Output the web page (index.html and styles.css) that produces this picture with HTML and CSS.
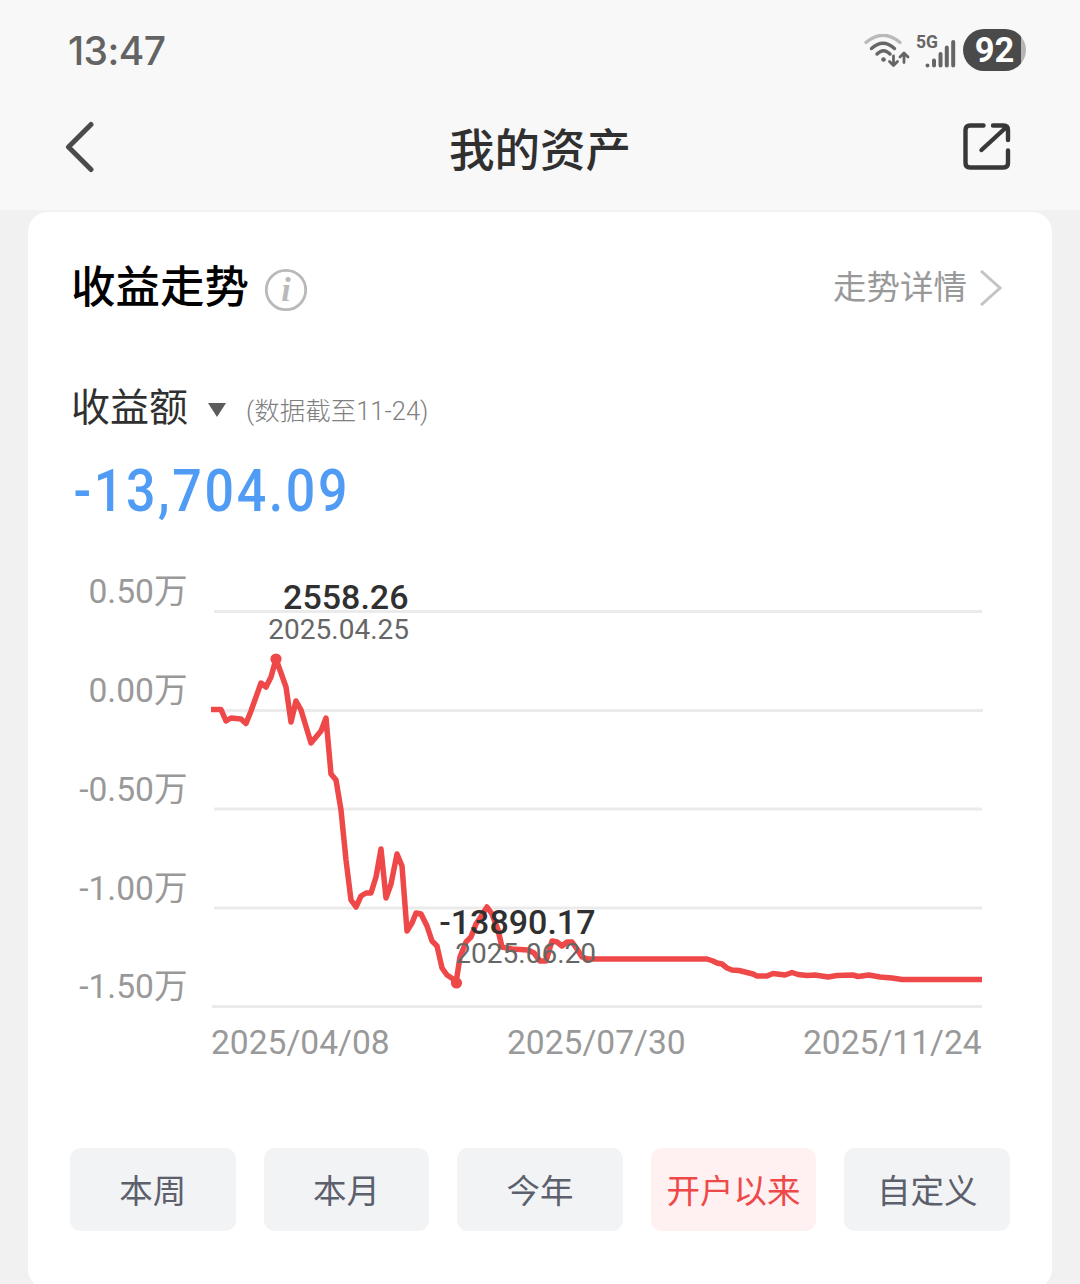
FILE: index.html
```
<!DOCTYPE html>
<html lang="zh-CN">
<head>
  <meta charset="UTF-8">
  <meta name="viewport" content="width=device-width, initial-scale=1.0">
  <title>我的资产</title>
  <link rel="stylesheet" href="styles.css">
</head>
<body>
  <header class="top">
    <div class="status-bar">
      <span class="time">13:47</span>
      <div class="status-icons">
        <svg class="wifi" width="48" height="38" viewBox="0 0 48 38" fill="none" stroke-linecap="round">
          <path d="M3 8.500Q20 -6 37 8.500" stroke="#b9b9b9" stroke-width="3.200"/>
          <path d="M8.500 14.500Q20 4 31.500 14.500" stroke="#666" stroke-width="3.400"/>
          <path d="M14 20Q20.500 13.500 27 20" stroke="#666" stroke-width="3.400"/>
          <circle cx="20.500" cy="25.500" r="2.300" fill="#666"/>
          <path d="M30.500 22V31M26.500 27.500L30.500 31.500L34.500 27.500M41 28.500V19.500M37 23L41 19L45 23" stroke="#666" stroke-width="2.800" stroke-linejoin="round"/>
        </svg>
        <svg class="signal" width="41" height="38" viewBox="0 0 41 38">
          <text x="0" y="14" class="net">5G</text>
          <path d="M11.500 31.500V31.500M18 31.500V26.500M24.500 31.500V20M30.800 31.500V13.500M37.200 31.500V8" fill="none" stroke="#666" stroke-width="4" stroke-linecap="round"/>
        </svg>
        <div class="battery"><span>92</span></div>
      </div>
    </div>
    <div class="nav-bar">
      <svg class="back" width="30" height="52" viewBox="0 0 30 52" fill="none">
        <path d="M26 3.500L3.500 26L26 48.500" stroke="#4b4b4b" stroke-width="5" stroke-linecap="round" stroke-linejoin="round"/>
      </svg>
      <h1>我的资产</h1>
      <svg class="share" width="48" height="48" viewBox="0 0 48 48" fill="none">
        <path d="M20.500 2.500H7Q2.500 2.500 2.500 7V40Q2.500 44.500 7 44.500H40.500Q45 44.500 45 40V27.500M30 2.500H40.500Q45 2.500 45 7V17M43.500 4L18.500 27" stroke="#383838" stroke-width="4.400" stroke-linecap="round" stroke-linejoin="round"/>
      </svg>
    </div>
  </header>

  <main class="card">
    <div class="card-head">
      <h2>收益走势</h2>
      <svg class="info" width="44" height="44" viewBox="0 0 44 44">
        <circle cx="22" cy="22" r="19.700" fill="none" stroke="#b9b9b9" stroke-width="2.800"/>
        <text x="22" y="33" text-anchor="middle">i</text>
      </svg>
      <a class="detail"><span>走势详情</span>
        <svg width="24" height="36" viewBox="0 0 24 36" fill="none"><path d="M2 1L21 18L2 35" stroke="#c4c4c4" stroke-width="3"/></svg>
      </a>
    </div>

    <div class="metric">
      <span class="metric-name">收益额</span>
      <span class="caret"></span>
      <span class="metric-note">(数据截至11-24)</span>
    </div>
    <div class="amount">-13,704.09</div>

    <svg class="chart" width="940" height="510" viewBox="70 560 940 510">
      <g class="grid">
        <path d="M214 611.500H982M214 710.500H983M214 809H982M214 908H982M212 1006.500H982"/>
      </g>
      <g class="y-axis">
        <text x="187.500" y="603">0.50万</text>
        <text x="187.500" y="702">0.00万</text>
        <text x="187.500" y="800.500">-0.50万</text>
        <text x="187.500" y="899.500">-1.00万</text>
        <text x="187.500" y="998">-1.50万</text>
      </g>
      <g class="x-axis">
        <text x="211" y="1054">2025/04/08</text>
        <text x="507" y="1054">2025/07/30</text>
        <text x="803" y="1054">2025/11/24</text>
      </g>
      <polyline class="line" points="211,709.500 221,709.500 226,721 231,718 241,719 246,723.500 251,711 261,683 266,687 271,677 276,659 286,687 291,722 296,701 301,710 311,743 321,731 326,718 331,774 336,780 341,810 346,860 351,900 356,907 361,896 366,893 371,893 376,877 381,849 386,898 391,884 397,854 402,866 407,931 412,923 416,913 421,914 427,926 432,941 437,946 442,968 447,975 453,979 456,983 460,957 466,942 471,937 476,924 482,915 487,907 492,914 498,930 502,947 512,949 528,950 534,953 540,961 546,961 552,941 557,942 562,946 567,942 572,942 577,949 582,957 588,959 707,959 713,961 717,963 722,964 727,968 732,970 739,970.500 747,972.500 753,974 757,976 767,976 773,973.500 785,975 792,972.500 798,974.500 807,975.500 815,975 828,977 837,975.500 853,975 858,976.500 869,975 880,977 892,978 902,979.500 982,979.500"/>
      <circle class="dot" cx="276" cy="659" r="5.600"/>
      <circle class="dot" cx="456.500" cy="983" r="5.600"/>
      <g class="mark">
        <text class="mark-value" x="408.500" y="609">2558.26</text>
        <text class="mark-date" x="409" y="639">2025.04.25</text>
        <text class="mark-value" x="595.500" y="934">-13890.17</text>
        <text class="mark-date" x="596" y="963">2025.06.20</text>
      </g>
    </svg>

    <div class="ranges">
      <button>本周</button>
      <button>本月</button>
      <button>今年</button>
      <button class="active">开户以来</button>
      <button>自定义</button>
    </div>
  </main>
</body>
</html>
```
FILE: styles.css
```
* {
  box-sizing: border-box;
}
body {
  margin: 0;
  height: 1284px;
  overflow: hidden;
  background: #f1f1f1;
  font-family: Roboto, "Noto Sans CJK SC", sans-serif;
}
h1, h2 {
  margin: 0;
  font-weight: 500;
}
.top {
  height: 210px;
  background: #f8f8f8;
}
.status-bar {
  display: flex;
  justify-content: space-between;
  height: 100px;
  padding: 29px 54px 0 68px;
}
.time {
  font: 500 39px/44px Inter, sans-serif;
  letter-spacing: -0.6px;
  color: #636363;
}
.status-icons {
  display: flex;
}
.wifi {
  margin: 5px 5px 0 0;
}
.signal {
  margin: 5px 6px 0 0;
  overflow: visible;
}
.net {
  font: 700 17.5px Roboto, sans-serif;
  fill: #666;
}
.battery {
  width: 63px;
  height: 42px;
  border-radius: 21px;
  background: linear-gradient(to right, #4a4a4a 58px, #b5b5b5 58px);
  color: #fff;
  font: 700 34.5px/43px Roboto, sans-serif;
  text-align: center;
}
.nav-bar {
  display: grid;
  grid-template-columns: 48px 1fr 48px;
  height: 110px;
  padding: 21px 69px 0 65px;
}
.nav-bar h1 {
  padding-left: 4px;
  font-size: 45.5px;
  line-height: 62px;
  text-align: center;
  color: #303030;
}
.share {
  margin-top: 2px;
}
.card {
  width: 1024px;
  height: 1077px;
  margin: 2px auto 0;
  padding: 44px 42px 0;
  border-radius: 20px;
  background: #fff;
}
.card-head {
  display: flex;
  align-items: center;
  height: 64px;
}
.card-head h2 {
  padding-left: 1px;
  font-size: 44.5px;
  line-height: 64px;
  color: #000;
}
.info {
  margin: 4px 0 0 15px;
}
.info text {
  font: italic 700 34px "Liberation Serif", serif;
  fill: #b9b9b9;
}
.detail {
  display: flex;
  align-items: center;
  gap: 12px;
  margin: 0 7px 0 auto;
  font-size: 33.5px;
  color: #999;
}
.detail span {
  margin-top: -7px;
}
.metric {
  display: flex;
  align-items: center;
  height: 56px;
  margin-top: 56px;
}
.metric-name {
  padding-left: 1px;
  font-size: 39px;
  color: #303030;
}
.caret {
  margin: 12px 20px 0;
  border: 9px solid transparent;
  border-top: 14px solid #5c5c5c;
  border-bottom: 0;
}
.metric-note {
  margin-top: 9px;
  font-size: 25.5px;
  font-weight: 300;
  color: #808080;
}
.amount {
  height: 128px;
  padding: 24px 0 0 4px;
  font-size: 59px;
  font-weight: 500;
  line-height: 70px;
  letter-spacing: 3px;
  color: #509cf4;
  transform: scaleX(0.88);
  transform-origin: left;
}
.chart {
  display: block;
}
.grid {
  stroke: #ebebeb;
  stroke-width: 3;
}
.y-axis, .x-axis {
  font-size: 33.6px;
  fill: #999;
}
.y-axis, .mark {
  text-anchor: end;
}
.line {
  fill: none;
  stroke: #ee4848;
  stroke-width: 5.5;
  stroke-linejoin: round;
}
.dot {
  fill: #ee4848;
}
.mark-value {
  font-size: 34px;
  font-weight: 500;
  fill: #303030;
}
.mark-date {
  font-size: 28px;
  fill: #666;
}
.ranges {
  display: grid;
  grid-template-columns: repeat(5, 1fr);
  gap: 28px;
  margin-top: 78px;
}
.ranges button {
  height: 83px;
  padding: 0 0 2px;
  border: 0;
  border-radius: 11px;
  background: #f2f3f5;
  font: 400 33.5px Roboto, "Noto Sans CJK SC", sans-serif;
  color: #5c606c;
}
.ranges .active {
  background: #fff1f1;
  color: #ee4848;
}
```
